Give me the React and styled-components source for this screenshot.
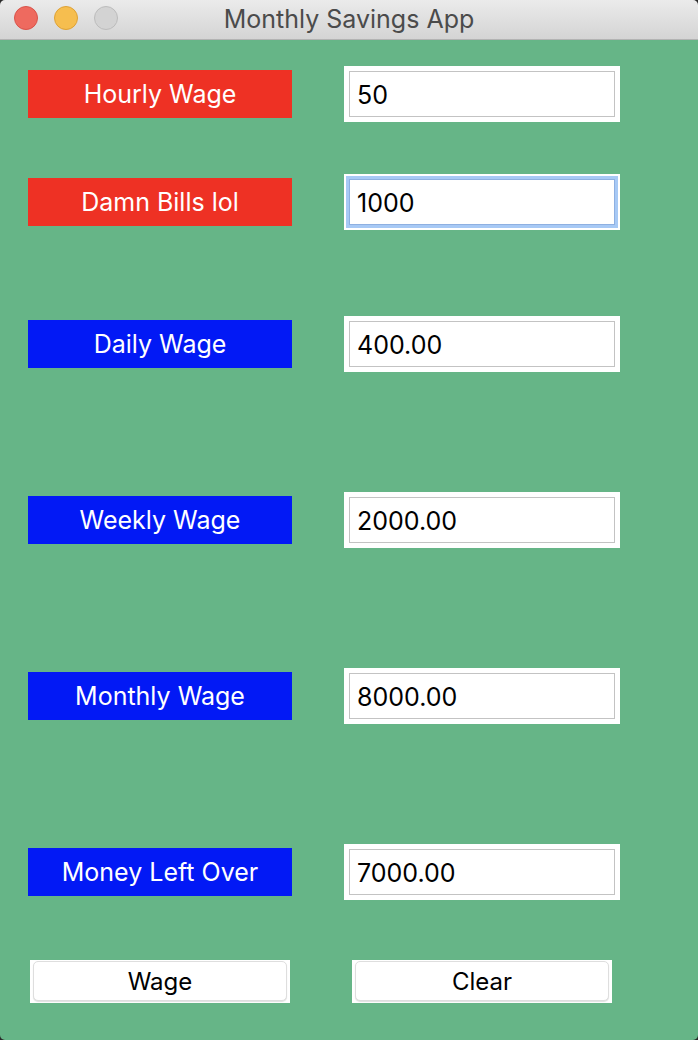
import React from "react";
import styled, { createGlobalStyle } from "styled-components";

const GlobalStyle = createGlobalStyle`
  html, body {
    margin: 0;
    padding: 0;
    background: #2a2a2a;
  }
  * {
    box-sizing: border-box;
  }
`;

const Window = styled.div({
  width: "698px",
  height: "1040px",
  display: "flex",
  flexDirection: "column",
  borderRadius: "5px",
  overflow: "hidden",
  fontFamily: "Inter, 'Liberation Sans', sans-serif",
});

const TitleBar = styled.div({
  height: "40px",
  flexShrink: 0,
  display: "flex",
  alignItems: "center",
  position: "relative",
  background: "linear-gradient(#ebebeb, #d4d4d4)",
  borderBottom: "1px solid #b3b3b3",
  paddingLeft: "14px",
  gap: "16px",
});

const Light = styled.span`
  width: 24px;
  height: 24px;
  border-radius: 50%;
  margin-top: -4px;
  background: ${(p) => p.color};
  border: 1px solid ${(p) => p.edge};
`;

const Title = styled.div({
  position: "absolute",
  left: 0,
  right: 0,
  top: "4px",
  textAlign: "center",
  fontSize: "25px",
  color: "#4b4b4b",
  pointerEvents: "none",
});

const Content = styled.div({
  flex: 1,
  background: "#66b587",
  paddingTop: "26px",
  display: "flex",
  flexDirection: "column",
});

const Row = styled.div`
  display: flex;
  align-items: center;
  padding-left: 28px;
  margin-top: ${(p) => p.gap || 0}px;
`;

const Label = styled.div`
  width: 264px;
  height: 48px;
  display: flex;
  align-items: center;
  justify-content: center;
  background: ${(p) => (p.kind === "input" ? "#ee3124" : "#0219f5")};
  color: #ffffff;
  font-size: 25px;
`;

const FieldFrame = styled.div({
  marginLeft: "52px",
  width: "276px",
  height: "56px",
  background: "#ffffff",
  padding: "5px",
});

const Field = styled.input`
  width: 100%;
  height: 100%;
  border: 1px solid ${(p) => (p.focused ? "#8eb0e1" : "#c3c3c3")};
  box-shadow: ${(p) => (p.focused ? "0 0 0 3px #a7c9f5" : "none")};
  outline: none;
  padding: 2px 7px 0;
  font-family: Inter, "Liberation Sans", sans-serif;
  font-size: 25px;
  color: #000000;
  background: #ffffff;
`;

const ButtonRow = styled.div({
  display: "flex",
  paddingLeft: "30px",
  marginTop: "60px",
  gap: "62px",
});

const ButtonFrame = styled.div({
  width: "260px",
  height: "43px",
  background: "#ffffff",
  padding: "1px 3px 2px",
});

const Button = styled.button({
  width: "100%",
  height: "100%",
  background: "#ffffff",
  border: "1px solid #dedede",
  borderRadius: "5px",
  boxShadow: "0 1px 1px rgba(0,0,0,0.12)",
  fontFamily: "Inter, 'Liberation Sans', sans-serif",
  fontSize: "24px",
  color: "#000000",
  padding: 0,
});

const rows = [
  { label: "Hourly Wage", value: "50", kind: "input", gap: 0 },
  { label: "Damn Bills lol", value: "1000", kind: "input", gap: 52, focused: true },
  { label: "Daily Wage", value: "400.00", kind: "output", gap: 86 },
  { label: "Weekly Wage", value: "2000.00", kind: "output", gap: 120 },
  { label: "Monthly Wage", value: "8000.00", kind: "output", gap: 120 },
  { label: "Money Left Over", value: "7000.00", kind: "output", gap: 120 },
];

export default function App() {
  return (
    <>
      <GlobalStyle />
      <Window>
        <TitleBar>
          <Light color="#ee6a5f" edge="#d9534a" />
          <Light color="#f6be4f" edge="#dea236" />
          <Light color="#d3d3d3" edge="#bcbcbc" />
          <Title>Monthly Savings App</Title>
        </TitleBar>
        <Content>
          {rows.map((r) => (
            <Row key={r.label} gap={r.gap}>
              <Label kind={r.kind}>{r.label}</Label>
              <FieldFrame>
                <Field defaultValue={r.value} focused={r.focused} />
              </FieldFrame>
            </Row>
          ))}
          <ButtonRow>
            <ButtonFrame>
              <Button>Wage</Button>
            </ButtonFrame>
            <ButtonFrame>
              <Button>Clear</Button>
            </ButtonFrame>
          </ButtonRow>
        </Content>
      </Window>
    </>
  );
}
